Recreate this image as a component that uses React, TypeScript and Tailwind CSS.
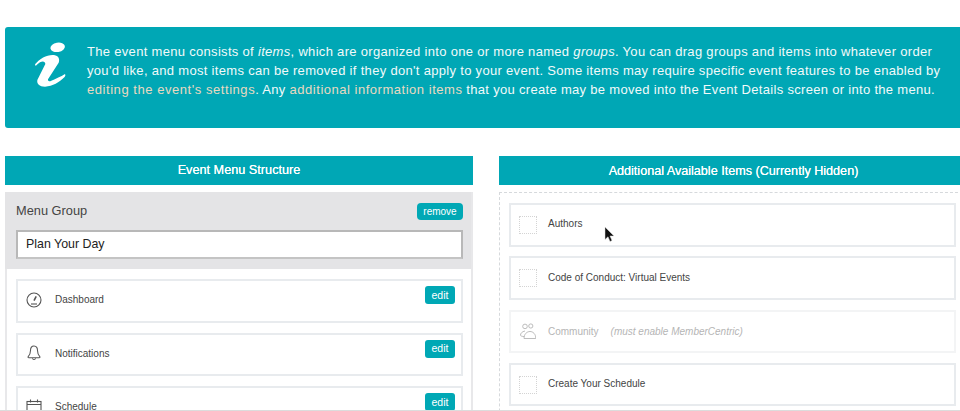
import React from 'react';

const font = { fontFamily: '"Liberation Sans", Arial, sans-serif' };

const GaugeIcon = () => (
  <svg width="16" height="16" viewBox="0 0 16 16" fill="none" stroke="#555" strokeWidth="1.1">
    <circle cx="8" cy="8" r="7" />
    <path d="M10.2 4.4 L8 8.6" strokeWidth="1.6" />
    <path d="M5 12 H11" />
  </svg>
);

const BellIcon = () => (
  <svg width="14" height="16" viewBox="0 0 16 18" fill="none" stroke="#555" strokeWidth="1.2" strokeLinejoin="round">
    <path d="M8 1 C5 1 4 3.4 4 6 C4 9.5 3.4 11 1.2 13.4 C1 14 1.3 14.4 2 14.4 H14 C14.7 14.4 15 14 14.8 13.4 C12.6 11 12 9.5 12 6 C12 3.4 11 1 8 1 Z" />
    <path d="M6.2 15 C6.6 17 9.4 17 9.8 15" />
  </svg>
);

const CalendarIcon = () => (
  <svg width="16" height="16" viewBox="0 0 16 16" fill="none" stroke="#555" strokeWidth="1.1">
    <rect x="1" y="2.5" width="14" height="13" />
    <path d="M1 5.5 H15 M4.5 0.5 V3.5 M11.5 0.5 V3.5" />
  </svg>
);

const PeopleIcon = () => (
  <svg width="16" height="16" viewBox="0 0 16 16" fill="none" stroke="#b5b5b5" strokeWidth="0.9">
    <circle cx="5" cy="3.4" r="2.3" />
    <circle cx="10.8" cy="3" r="2.1" />
    <path d="M4 15.5 C4 11 7 8.5 10 8.5 C13 8.5 15.8 11 15.8 15.5 Z" />
    <path d="M5 8 C2 8.5 0.5 10.5 0.5 12 C0.5 13.2 2 13.5 4.4 13.5" />
  </svg>
);

const MenuItem = ({ icon, label }: { icon: React.ReactNode; label: string }) => (
  <div className="flex h-[43.5px] shrink-0 border-2 border-[#e8ebee] bg-white pl-[8px] pr-[6px]">
    <div className="flex w-[16px] items-center justify-center pb-[2px]">{icon}</div>
    <span className="ml-[13px] self-center pb-[2px] text-[10px] text-[#444]">{label}</span>
    <button className="ml-auto mt-[5px] h-[18px] w-[30px] rounded-[3px] bg-[#00a8b5] text-[10.5px] leading-[17px] text-white">
      edit
    </button>
  </div>
);

const AvailableItem = ({ label }: { label: string }) => (
  <div className="flex h-[43.5px] shrink-0 items-center border-2 border-[#e8ebee] bg-white pl-[8px]">
    <div className="h-[18px] w-[18px] border border-dotted border-[#d4d4d4]" />
    <span className="ml-[11px] pb-[2px] text-[10px] text-[#444]">{label}</span>
  </div>
);

export default function App() {
  return (
    <div className="relative h-[411px] w-[960px] overflow-hidden bg-white" style={font}>
      <div className="w-[968px] pl-[5px] pt-[27px]">
        <div className="flex h-[101px] items-start rounded-[3px] bg-[#00a7b5] pl-[27px] pt-[13px] text-[13px] leading-[19px] tracking-[0.31px] text-[#f2fafa]">
          <svg width="36" height="50" viewBox="66 30 108 150" className="shrink-0">
            <ellipse cx="143" cy="52" rx="22" ry="14" transform="rotate(-10 143 52)" fill="#fff" />
            <path
              d="M75 103 C90 85 112 73 132 75 C146 77 150 88 146 98 L114 148 C113 154 118 155 124 152 C138 146 152 140 165 132 C167 136 166 139 163 142 C148 156 128 170 105 170 C88 170 80 162 82 150 L106 102 C106 94 98 92 90 97 C85 100 81 104 77 108 Z"
              fill="#fff"
            />
          </svg>
          <p className="ml-[19px] mt-[2px] whitespace-nowrap">
            The event menu consists of <em>items</em>, which are organized into one or more named <em>groups</em>. You
            can drag groups and items into whatever order
            <br />
            you'd like, and most items can be removed if they don't apply to your event. Some items may require
            specific event features to be enabled by
            <br />
            <span className="tracking-[0.55px] text-[#ead9c0]">editing the event's settings</span>. Any{' '}
            <span className="tracking-[0.52px] text-[#ead9c0]">additional information items</span> that you create may
            be moved into the Event Details screen or into the menu.
          </p>
        </div>

        <div className="mt-[28px] flex gap-[26px]">
          {/* left column */}
          <div className="w-[468px] shrink-0">
            <div className="flex h-[29px] items-center justify-center bg-[#00a7b5] pt-px text-[12.7px] text-white [text-shadow:0_0_0.6px_#fff]">
              Event Menu Structure
            </div>
            <div className="mt-[7px] border-x-2 border-[#e8e8ea]">
              <div className="-ml-[2px] h-[77px] bg-[#e4e4e6] pl-[11px] pr-[8px] pt-[10px]">
                <div className="flex items-start justify-between">
                  <span className="text-[12.8px] leading-[17px] text-[#444]">Menu Group</span>
                  <button className="mt-[1px] h-[17px] w-[46px] rounded-[4px] bg-[#00a8b5] text-[10px] leading-[16px] text-white">
                    remove
                  </button>
                </div>
                <div className="mt-[10px] flex h-[29px] items-center border-2 border-[#b8b8b8] border-b-[#c4c4c4] bg-white pl-[8px] text-[12.4px] text-[#222]">
                  Plan Your Day
                </div>
              </div>
              <div className="flex flex-col gap-[10px] pl-[9px] pr-[8px] pt-[10px]">
                <MenuItem icon={<GaugeIcon />} label="Dashboard" />
                <MenuItem icon={<BellIcon />} label="Notifications" />
                <MenuItem icon={<CalendarIcon />} label="Schedule" />
              </div>
            </div>
          </div>

          {/* right column */}
          <div className="w-[469px] shrink-0">
            <div className="flex h-[29px] items-center justify-center bg-[#00a7b5] pt-px text-[12.6px] text-white [text-shadow:0_0_0.6px_#fff]">
              Additional Available Items (Currently Hidden)
            </div>
            <div className="mt-[7px] flex h-[300px] flex-col gap-[9.8px] border-l border-t border-dashed border-[#d6d9dc] pl-[9px] pr-[12px] pt-[10px]">
              <AvailableItem label="Authors" />
              <AvailableItem label="Code of Conduct: Virtual Events" />
              <div className="flex h-[43.5px] shrink-0 items-center border-2 border-[#f3f4f5] bg-white pl-[8px] text-[10px] text-[#b5b5b5]">
                <div className="flex w-[18px] justify-center">
                  <PeopleIcon />
                </div>
                <span className="ml-[11px]">Community</span>
                <em className="ml-[12px]">(must enable MemberCentric)</em>
              </div>
              <AvailableItem label="Create Your Schedule" />
            </div>
          </div>
        </div>
      </div>

      {/* window edge and mouse pointer lie over the page */}
      <div className="absolute inset-x-0 bottom-0 h-px bg-[#dcdcdc]" />
      <svg className="absolute left-[604px] top-[226px]" width="11" height="17" viewBox="0 0 11 17">
        <path d="M1 1 V13.5 L4 10.8 L6 15.5 L8 14.6 L6 10 H10 Z" fill="#111" stroke="#ddd" strokeWidth="0.5" />
      </svg>
    </div>
  );
}
